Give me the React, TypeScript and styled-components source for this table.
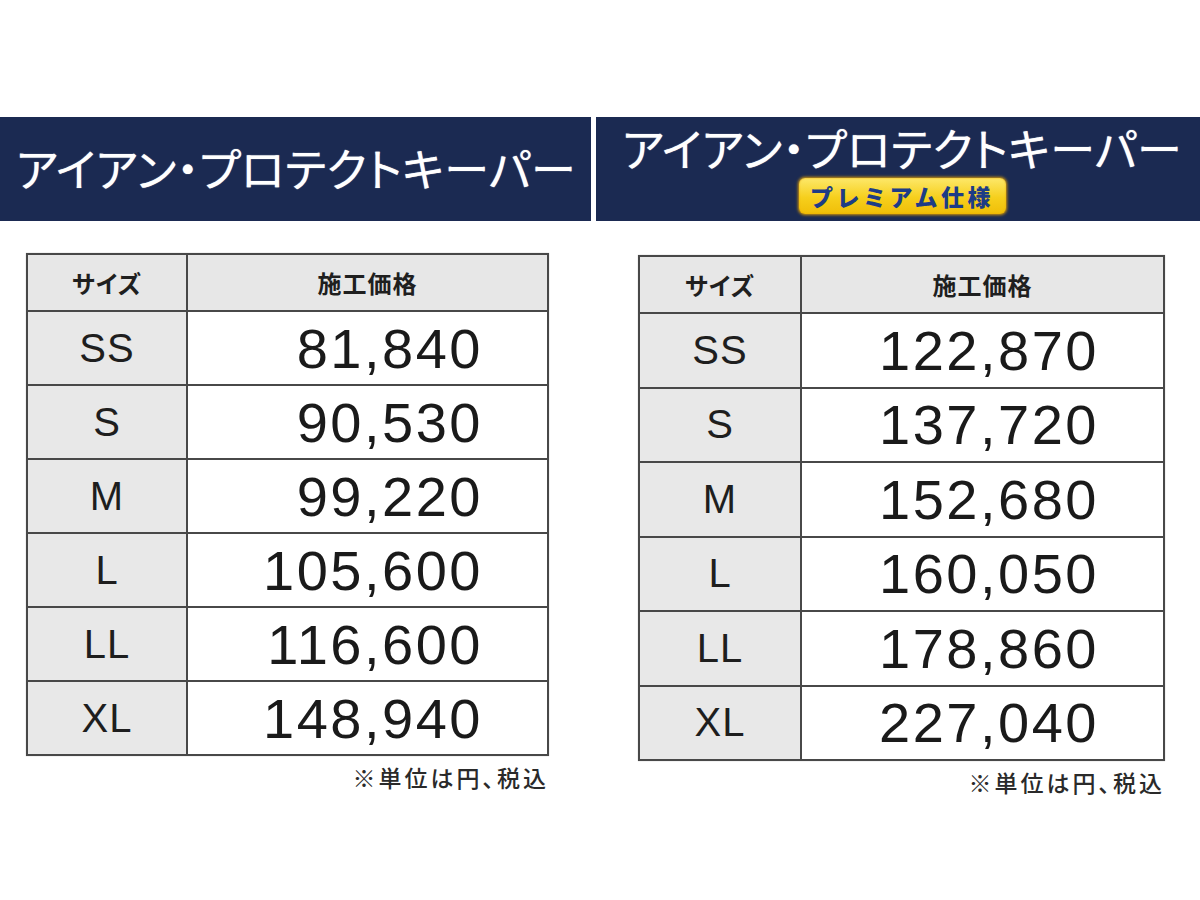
import React from 'react';
import styled, { createGlobalStyle } from 'styled-components';

const JP = `'Noto Sans CJK JP', 'Noto Sans', sans-serif`;
const LATIN = `'Liberation Sans', Arial, sans-serif`;

const GlobalStyle = createGlobalStyle`
  html, body {
    margin: 0;
    padding: 0;
    background: #ffffff;
  }
  body {
    font-family: ${JP};
  }
`;

const Page = styled.div`
  width: 1200px;
  height: 900px;
  padding-top: 117px;
  box-sizing: border-box;
  display: flex;
  flex-direction: row;
  gap: 5px;
`;

const Panel = styled.section<{ $width: number }>`
  width: ${(p) => p.$width}px;
  display: flex;
  flex-direction: column;
`;

const PanelBody = styled.div<{ $pad: string }>`
  padding: ${(p) => p.$pad};
  display: flex;
  flex-direction: column;
  align-items: flex-end;
`;

const Banner = styled.header<{ $centered?: boolean }>`
  height: 104px;
  background-color: #1b2a52;
  display: flex;
  flex-direction: column;
  justify-content: ${(p) => (p.$centered ? 'flex-start' : 'center')};
  align-items: ${(p) => (p.$centered ? 'center' : 'flex-start')};
  padding: ${(p) => (p.$centered ? '5px 0 0 8px' : '0 0 2px 16px')};
  box-sizing: border-box;
`;

const Title = styled.h1`
  margin: 0;
  font-family: ${JP};
  font-feature-settings: 'palt';
  font-weight: 400;
  font-size: 45px;
  line-height: 52px;
  letter-spacing: 0.3px;
  color: #ffffff;
  white-space: nowrap;
  text-shadow: 0 0 1px rgba(255, 255, 255, 0.8);
`;

const Badge = styled.span`
  margin-top: 4px;
  height: 36px;
  width: 207px;
  box-sizing: border-box;
  display: flex;
  align-items: center;
  justify-content: center;
  border-radius: 6px;
  background: linear-gradient(180deg, #fde86a 0%, #f6cf1c 55%, #f0be08 100%);
  box-shadow: 0 0 3px 1px #d79a06, inset 0 0 2px #e8a400;
  font-family: ${JP};
  font-weight: 900;
  font-size: 23px;
  letter-spacing: 3.5px;
  color: #1d3c86;
`;

const Table = styled.table<{ $width: number; $sizeCol: number }>`
  width: ${(p) => p.$width}px;
  border-collapse: collapse;
  table-layout: fixed;
  border: 2px solid #6e6e6e;
  box-shadow: 0 0 1px rgba(0, 0, 0, 0.3);

  col.size {
    width: ${(p) => p.$sizeCol}px;
  }
`;

const HeadCell = styled.th`
  height: 55px;
  padding: 0;
  background: #e7e7e7;
  border: 2px solid #484848;
  font-family: ${JP};
  font-feature-settings: 'palt';
  font-weight: 700;
  font-size: 24px;
  letter-spacing: 1px;
  color: #1f1f1f;
  text-align: center;
  vertical-align: middle;
`;

const SizeCell = styled.td<{ $h: number }>`
  height: ${(p) => p.$h}px;
  padding: 0;
  background: #e8e8e8;
  border: 2px solid #484848;
  font-family: ${LATIN};
  font-size: 40px;
  letter-spacing: 1px;
  color: #1e1e1e;
  text-align: center;
  vertical-align: middle;
`;

const PriceCell = styled.td<{ $h: number }>`
  height: ${(p) => p.$h}px;
  padding: 0 64px 0 0;
  background: #ffffff;
  border: 2px solid #484848;
  font-family: ${LATIN};
  font-size: 56px;
  letter-spacing: 2.5px;
  color: #1a1a1a;
  text-align: right;
  vertical-align: middle;
`;

const Note = styled.p`
  margin: 4px 0 0 0;
  font-family: ${JP};
  font-feature-settings: 'palt';
  font-weight: 500;
  font-size: 23px;
  letter-spacing: 3px;
  color: #2a2a2a;
`;

type Row = [string, string];

const basic: Row[] = [
  ['SS', '81,840'],
  ['S', '90,530'],
  ['M', '99,220'],
  ['L', '105,600'],
  ['LL', '116,600'],
  ['XL', '148,940'],
];

const premium: Row[] = [
  ['SS', '122,870'],
  ['S', '137,720'],
  ['M', '152,680'],
  ['L', '160,050'],
  ['LL', '178,860'],
  ['XL', '227,040'],
];

function PriceTable({ rows, width, sizeCol, rowH }: { rows: Row[]; width: number; sizeCol: number; rowH: number }) {
  return (
    <Table $width={width} $sizeCol={sizeCol}>
      <colgroup>
        <col className='size' />
        <col />
      </colgroup>
      <thead>
        <tr>
          <HeadCell>サイズ</HeadCell>
          <HeadCell>施工価格</HeadCell>
        </tr>
      </thead>
      <tbody>
        {rows.map(([size, price]) => (
          <tr key={size}>
            <SizeCell $h={rowH}>{size}</SizeCell>
            <PriceCell $h={rowH}>{price}</PriceCell>
          </tr>
        ))}
      </tbody>
    </Table>
  );
}

export default function App() {
  return (
    <>
      <GlobalStyle />
      <Page>
        <Panel $width={591}>
          <Banner>
            <Title>アイアン・プロテクトキーパー</Title>
          </Banner>
          <PanelBody $pad='32px 42px 0 26px'>
            <PriceTable rows={basic} width={523} sizeCol={160} rowH={72} />
            <Note>※単位は円、税込</Note>
          </PanelBody>
        </Panel>
        <Panel $width={604}>
          <Banner $centered>
            <Title>アイアン・プロテクトキーパー</Title>
            <Badge>プレミアム仕様</Badge>
          </Banner>
          <PanelBody $pad='34px 35px 0 42px'>
            <PriceTable rows={premium} width={527} sizeCol={162} rowH={72.5} />
            <Note>※単位は円、税込</Note>
          </PanelBody>
        </Panel>
      </Page>
    </>
  );
}
